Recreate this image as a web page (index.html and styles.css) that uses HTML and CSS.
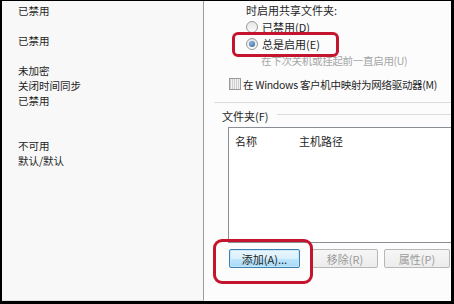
FILE: index.html
```html
<!DOCTYPE html>
<html lang="zh-CN">
<head>
  <meta charset="UTF-8">
  <meta name="viewport" content="width=device-width, initial-scale=1.0">
  <title>共享文件夹</title>
  <link rel="stylesheet" href="styles.css">
</head>
<body>

  <div class="window">

    <div class="summary">
      <div class="summary-row">已禁用</div>
      <div class="summary-row"></div>
      <div class="summary-row">已禁用</div>
      <div class="summary-row"></div>
      <div class="summary-row">未加密</div>
      <div class="summary-row">关闭时间同步</div>
      <div class="summary-row">已禁用</div>
      <div class="summary-row"></div>
      <div class="summary-row"></div>
      <div class="summary-row">不可用</div>
      <div class="summary-row">默认/默认</div>
    </div>

    <div class="settings">
      <div class="opt-row opt-title">时启用共享文件夹:</div>
      <div class="opt-row opt-radio1">
        <span class="radio"></span><span>已禁用(D)</span>
      </div>
      <div class="opt-row opt-radio2">
        <span class="radio checked"></span><span>总是启用(E)</span>
      </div>
      <div class="opt-row opt-hint">在下次关机或挂起前一直启用(U)</div>

      <div class="opt-row opt-check">
        <span class="checkbox"></span><span>在 Windows 客户机中映射为网络驱动器(M)</span>
      </div>

      <div class="separator"></div>

      <div class="group-title">
        <span>文件夹(F)</span>
        <span class="group-line"></span>
      </div>

      <div class="listbox">
        <div class="list-head">
          <span class="col-name">名称</span>
          <span class="col-path">主机路径</span>
        </div>
      </div>

      <div class="buttons">
        <button class="btn btn-add">添加(A)...</button>
        <button class="btn btn-remove" disabled>移除(R)</button>
        <button class="btn btn-props" disabled>属性(P)</button>
      </div>
    </div>

    <!-- red marks drawn over the dialog -->
    <div class="mark mark-radio"></div>
    <div class="mark mark-add"></div>

  </div>

</body>
</html>
```

FILE: styles.css
```css
body{
  margin:0;
  background-color:#000;
  height:304px;
  overflow:hidden;
}
.window{
  position:relative;
  margin:1px 3px 3px 2px;
  height:300px;
  display:flex;
  font-family:"Noto Sans CJK SC","Liberation Sans",sans-serif;
  font-size:11px;
  color:#1e1e1e;
}

/* left summary column */
.summary{
  width:202px;
  flex:none;
  background-color:#f8f8f8;
  border-right:1px solid #9c9c9c;
  border-bottom:1px solid #e2e2e2;
  box-sizing:border-box;
  padding-top:2px;
  padding-left:16px;
  font-size:10.5px;
}
.summary-row{
  height:15px;
  line-height:15px;
  white-space:nowrap;
}

/* right settings area */
.settings{
  flex:1;
  background-color:#fcfcfc;
  overflow:hidden;
}
.opt-row{
  display:flex;
  align-items:center;
  white-space:nowrap;
}
.opt-title{
  height:17px;
  padding-left:42px;
}
.opt-radio1{
  height:18px;
  padding-left:42px;
}
.opt-radio2{
  height:16px;
  padding-left:42px;
}
.opt-hint{
  height:16px;
  padding-left:57px;
  color:#a6a6a6;
  font-size:10.5px;
  letter-spacing:-0.3px;
}
.opt-check{
  height:16px;
  margin-top:8px;
  padding-left:25px;
  font-size:10.5px;
  letter-spacing:-0.3px;
}

.radio{
  width:10px;
  height:10px;
  margin-right:4px;
  border:1px solid #9a9a9a;
  border-radius:50%;
  background:linear-gradient(#e6e6e6,#fbfbfb);
  position:relative;
  flex:none;
}
.radio.checked::after{
  content:"";
  position:absolute;
  left:2px;
  top:2px;
  width:6px;
  height:6px;
  border-radius:50%;
  background:radial-gradient(circle at 40% 35%,#8fb8e0,#2a5d93);
}
.checkbox{
  width:10px;
  height:10px;
  margin-right:2px;
  border:1px solid #9a9a9a;
  background:repeating-linear-gradient(90deg,#cfcfcf 0 1px,#f2f2f2 1px 2px);
  flex:none;
}

.separator{
  margin:10px 0 0 10px;
  border-top:1px solid #dcdcdc;
}

.group-title{
  display:flex;
  align-items:center;
  height:14px;
  margin-top:6px;
  padding-left:18px;
}
.group-line{
  flex:1;
  margin-left:8px;
  margin-top:-3px;
  border-top:1px solid #dcdcdc;
}

.listbox{
  height:116px;
  margin:4px -2px 0 24px;
  border:1px solid #8a8f95;
  background-color:#fff;
  box-sizing:border-box;
}
.list-head{
  display:flex;
  align-items:center;
  height:25px;
  padding-left:6px;
}
.col-name{
  width:64px;
}

.buttons{
  display:flex;
  margin-top:6px;
  padding-left:25px;
}
.btn{
  height:19px;
  padding:0;
  font-family:inherit;
  font-size:11px;
  border-radius:2px;
  box-sizing:border-box;
}
.btn-add{
  width:71px;
  border:1px solid #3c7fb1;
  background:linear-gradient(#eaf6fd 0%,#d9f0fc 50%,#bee6fd 51%,#a7d9f5 100%);
  color:#1e1e1e;
  box-shadow:inset 0 0 0 1px #c6e7f8;
}
.btn-remove,
.btn-props{
  width:66px;
  border:1px solid #b7b7b7;
  background:linear-gradient(#f6f6f6,#ececec);
  color:#9a9a9a;
}
.btn-remove{
  margin-left:12px;
}
.btn-props{
  margin-left:6px;
}

/* red annotation outlines */
.mark{
  position:absolute;
  border:3px solid #c4142e;
  box-sizing:border-box;
}
.mark-radio{
  left:230px;
  top:31px;
  width:107px;
  height:25px;
  border-radius:6px;
}
.mark-add{
  left:211px;
  top:238px;
  width:100px;
  height:45px;
  border-radius:9px;
}
```
